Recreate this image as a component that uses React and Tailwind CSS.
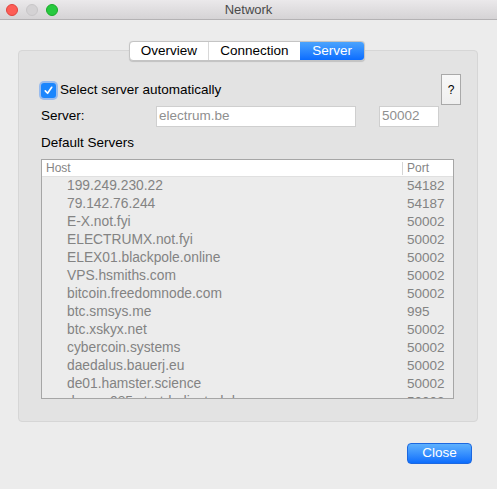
const servers = [
    ["199.249.230.22", "54182"],
    ["79.142.76.244", "54187"],
    ["E-X.not.fyi", "50002"],
    ["ELECTRUMX.not.fyi", "50002"],
    ["ELEX01.blackpole.online", "50002"],
    ["VPS.hsmiths.com", "50002"],
    ["bitcoin.freedomnode.com", "50002"],
    ["btc.smsys.me", "995"],
    ["btc.xskyx.net", "50002"],
    ["cybercoin.systems", "50002"],
    ["daedalus.bauerj.eu", "50002"],
    ["de01.hamster.science", "50002"],
    ["dragon085.startdedicated.de", "50002"],
];

function TitleBar() {
    return (
        <div className="relative flex h-[20px] items-center border-b border-[#b4b2b4] bg-gradient-to-b from-[#ebe9eb] to-[#d5d3d5]">
            <div className="flex items-center gap-[8px] pl-[6px]">
                <span className="h-[12px] w-[12px] rounded-full border border-[#e0443e] bg-[#fd5d56]" />
                <span className="h-[12px] w-[12px] rounded-full border border-[#c8c6c8] bg-[#d4d2d4]" />
                <span className="h-[12px] w-[12px] rounded-full border border-[#1aab29] bg-[#27c93f]" />
            </div>
            <span className="absolute inset-x-0 text-center text-[13px] leading-none text-[#4a4a4a]">Network</span>
        </div>
    );
}

function Tabs() {
    const tabs = ["Overview", "Connection", "Server"];
    return (
        <div className="relative z-10 ml-[129px] mt-[21px] flex h-[20px] w-[236px] overflow-hidden rounded-[4px] border border-[#c4c4c4] bg-white text-[13.5px] leading-none shadow-[0_0.5px_1px_rgba(0,0,0,0.15)]">
            {tabs.map((t, i) => (
                <div
                    key={t}
                    className={
                        t === "Server"
                            ? "flex flex-1 basis-[64px] items-center justify-center bg-gradient-to-b from-[#4aa3fd] to-[#0a6cff] text-white"
                            : i === 0
                            ? "flex basis-[79px] items-center justify-center border-r border-[#d8d8d8] text-black"
                            : "flex basis-[92px] items-center justify-center text-black"
                    }
                >
                    {t}
                </div>
            ))}
        </div>
    );
}

export default function App() {
    return (
        <div className="h-[489px] w-[497px] overflow-hidden bg-[#ececec] font-['Liberation_Sans',Arial,sans-serif] text-[13.5px] text-black">
            <TitleBar />
            <Tabs />

            <div className="ml-[18px] -mt-[11px] h-[372px] w-[460px] rounded-[4px] border border-[#d6d6d6] bg-[#e3e3e3] pl-[22px] pt-[23px]">
                <div className="flex items-start">
                    <label className="mt-[6px] flex flex-1 items-center gap-[4px]">
                        <span className="flex h-[15px] w-[15px] items-center justify-center rounded-[3px] bg-[#1b86fd] shadow-[0_0_0_2px_rgba(80,150,250,0.5)]">
                            <svg viewBox="0 0 12 12" className="h-[11px] w-[11px]" fill="none" stroke="white" strokeWidth="1.8" strokeLinecap="round" strokeLinejoin="round">
                                <path d="M2.5 6.5 L5 9 L9.5 2.5" />
                            </svg>
                        </span>
                        <span>Select server automatically</span>
                    </label>
                    <button className="mr-[16px] flex h-[31px] w-[20px] items-center justify-center border border-[#a9a9a9] bg-gradient-to-b from-[#f8f8f8] to-[#efefef] text-[12px]">?</button>
                </div>

                <div className="mt-[1px] flex h-[21px] items-center">
                    <span className="w-[115px]">Server:</span>
                    <div className="flex h-[21px] w-[200px] items-center border border-[#cfcfcf] bg-white px-[2px] text-[#8f8f8f]">electrum.be</div>
                    <div className="ml-[23px] flex h-[21px] w-[60px] items-center border border-[#cfcfcf] bg-white px-[2px] text-[#8f8f8f]">50002</div>
                </div>

                <div className="mt-[8px] leading-[16px]">Default Servers</div>

                <div className="mt-[8px] h-[240px] w-[413px] overflow-hidden border border-[#a6a6a6] bg-[#ececec]">
                    <div className="flex h-[17px] items-center border-b border-[#e0e0e0] bg-white text-[12px] text-[#858585]">
                        <span className="flex-1 pl-[4px]">Host</span>
                        <span className="flex h-[13px] w-[51px] items-center border-l border-[#d5d5d5] pl-[4px]">Port</span>
                    </div>
                    {servers.map(([host, port]) => (
                        <div key={host} className="flex h-[18px] items-center text-[#838383]">
                            <span className="flex-1 pl-[25px] text-[13.8px]">{host}</span>
                            <span className="w-[51px] pl-[5px]">{port}</span>
                        </div>
                    ))}
                </div>
            </div>

            <div className="mr-[25px] mt-[21px] flex justify-end">
                <button className="flex h-[21px] w-[65px] items-center justify-center rounded-[4px] border border-[#1c68e0] bg-gradient-to-b from-[#5eb1fd] to-[#0b6dfd] text-[13.5px] text-white">Close</button>
            </div>
        </div>
    );
}
